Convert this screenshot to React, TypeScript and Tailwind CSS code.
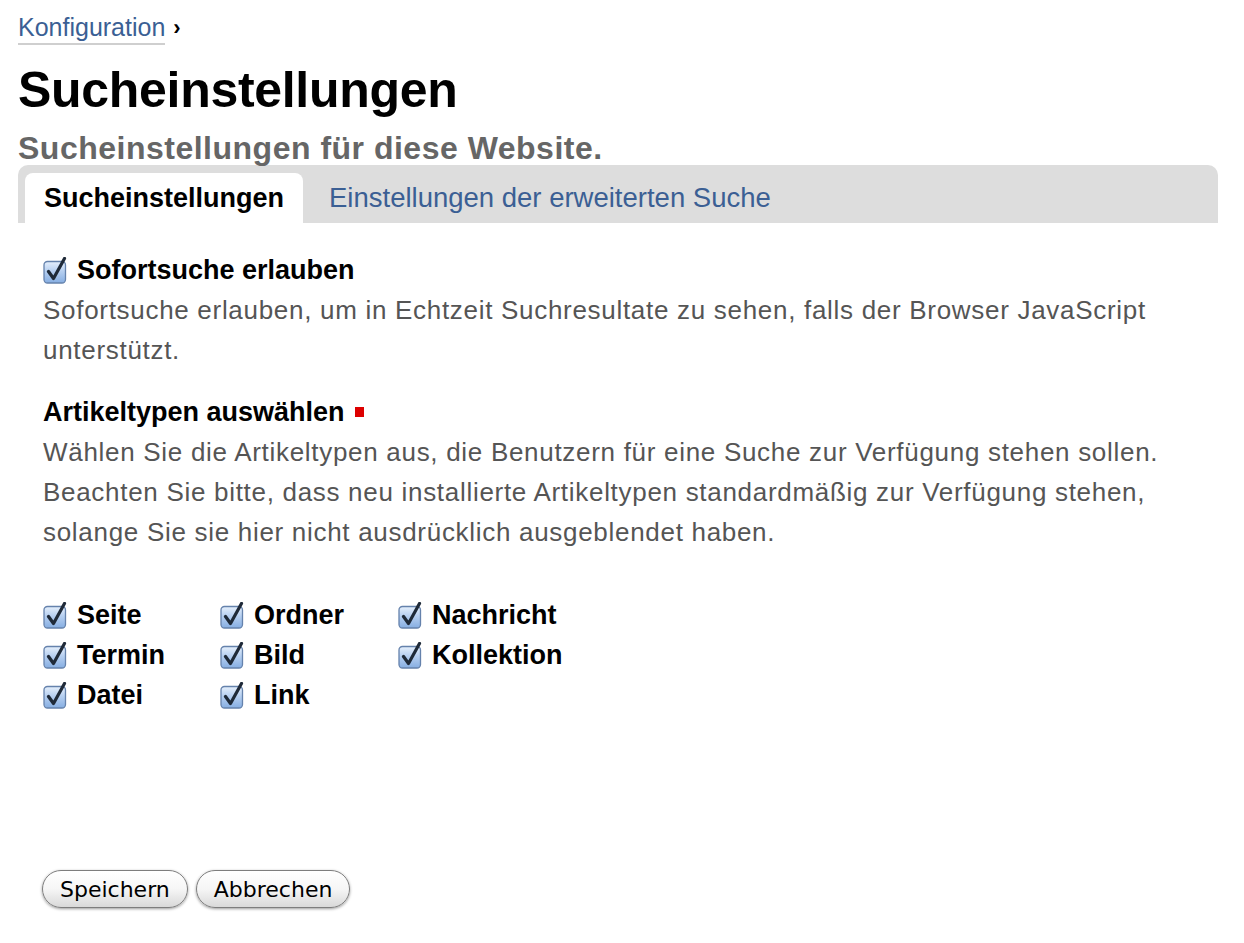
import React from "react";

function CheckIcon() {
  return (
    <svg width="25" height="27" viewBox="0 0 25 27" className="shrink-0">
      <defs>
        <linearGradient id="cbg" x1="0" y1="0" x2="0" y2="1">
          <stop offset="0" stopColor="#e6f0fc" />
          <stop offset="0.45" stopColor="#b6cff0" />
          <stop offset="1" stopColor="#86aee2" />
        </linearGradient>
      </defs>
      <rect x="1" y="4.5" width="21.5" height="21.5" rx="3.5" fill="url(#cbg)" stroke="#6582ac" strokeWidth="1.3" />
      <path d="M5.5 14.5 L10.5 21.5 L21.5 1.5" fill="none" stroke="#1f2a38" strokeWidth="3.2" strokeLinecap="round" strokeLinejoin="round" />
    </svg>
  );
}

function Option({ label }: { label: string }) {
  return (
    <div className="flex items-center gap-[9px] h-[40px]">
      <CheckIcon />
      <span className="text-[27px] font-bold text-black">{label}</span>
    </div>
  );
}

function Button({ children }: { children: React.ReactNode }) {
  return (
    <button className="h-[38px] px-[17px] rounded-full border border-[#7d7d7d] bg-gradient-to-b from-white via-[#f6f6f6] to-[#d9d9d9] shadow-[0_1px_3px_rgba(0,0,0,0.4)] text-[22px] text-black font-['DejaVu_Sans',sans-serif]">
      {children}
    </button>
  );
}

export default function App() {
  const columns = [
    ["Seite", "Termin", "Datei"],
    ["Ordner", "Bild", "Link"],
    ["Nachricht", "Kollektion"],
  ];

  return (
    <div className="w-[1244px] h-[943px] bg-white font-['Liberation_Sans',Arial,sans-serif] overflow-hidden">
      <div className="pl-[18px] pr-[26px] pt-[11px]">
        {/* breadcrumb */}
        <div className="flex items-center gap-[8px] text-[25px] leading-[32px]">
          <a className="text-[#3b5f94] border-b-2 border-[#cfcfcf]">Konfiguration</a>
          <span className="text-black text-[22px] font-bold">›</span>
        </div>

        <h1 className="mt-[17px] text-[50px] leading-[56px] font-bold tracking-[-0.3px] text-black">
          Sucheinstellungen
        </h1>
        <p className="mt-[12px] text-[32px] leading-[36px] font-bold tracking-[0.5px] text-[#666]">
          Sucheinstellungen für diese Website.
        </p>

        {/* tabs */}
        <div className="-mt-[1px] h-[58px] bg-[#dddddd] rounded-t-[10px] flex items-end pl-[7px]">
          <div className="h-[50px] w-[278px] bg-white rounded-t-[8px] flex items-center justify-center text-[27px] font-bold text-black">
            Sucheinstellungen
          </div>
          <div className="h-[50px] flex items-center pl-[26px] text-[27.5px] text-[#3b5f94]">
            Einstellungen der erweiterten Suche
          </div>
        </div>

        <div className="pl-[25px] pr-[30px]">
          {/* instant search */}
          <div className="mt-[27px] flex items-center gap-[9px] h-[40px]">
            <CheckIcon />
            <span className="text-[27px] font-bold text-black">Sofortsuche erlauben</span>
          </div>
          <p className="text-[26px] leading-[40px] tracking-[0.7px] text-[#555]">
            Sofortsuche erlauben, um in Echtzeit Suchresultate zu sehen, falls der Browser JavaScript unterstützt.
          </p>

          {/* types */}
          <div className="mt-[22px] flex items-center gap-[10px] h-[40px]">
            <span className="text-[27px] font-bold text-black">Artikeltypen auswählen</span>
            <span className="w-[9px] h-[10px] bg-[#dd0000]" />
          </div>
          <p className="text-[26px] leading-[40px] tracking-[0.7px] text-[#555]">
            Wählen Sie die Artikeltypen aus, die Benutzern für eine Suche zur Verfügung stehen sollen. Beachten Sie bitte, dass neu installierte Artikeltypen standardmäßig zur Verfügung stehen, solange Sie sie hier nicht ausdrücklich ausgeblendet haben.
          </p>

          <div className="mt-[43px] flex">
            {columns.map((col, i) => (
              <div key={i} className={i === 0 ? "w-[177px]" : i === 1 ? "w-[178px]" : ""}>
                {col.map((label) => (
                  <Option key={label} label={label} />
                ))}
              </div>
            ))}
          </div>

          <div className="mt-[155px] flex gap-[8px] -ml-[1px]">
            <Button>Speichern</Button>
            <Button>Abbrechen</Button>
          </div>
        </div>
      </div>
    </div>
  );
}
